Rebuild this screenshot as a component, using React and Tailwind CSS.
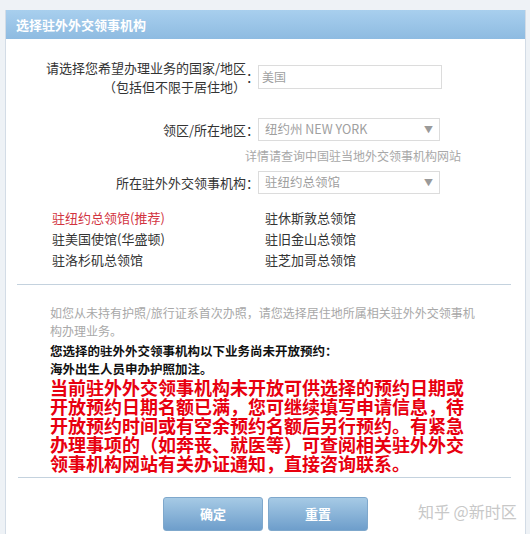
import React from "react";

const font = { fontFamily: '"Noto Sans CJK SC", "Noto Sans", sans-serif' };

function Arrow() {
  return <span className="text-[9px] text-[#9a9a9a] leading-none">▼</span>;
}

function SelectBox({ value }) {
  return (
    <div className="w-[182px] h-[23px] border border-[#dcdcdc] bg-white flex items-center justify-between pl-[6px] pr-[6px]">
      <span className="text-[12.5px] text-[#a0a0a0] leading-none">{value}</span>
      <Arrow />
    </div>
  );
}

function Colon() {
  return <div className="w-[12px] text-right text-[13px] text-[#333]">：</div>;
}

export default function App() {
  const left = ["驻纽约总领馆(推荐)", "驻美国使馆(华盛顿)", "驻洛杉矶总领馆"];
  const right = ["驻休斯敦总领馆", "驻旧金山总领馆", "驻芝加哥总领馆"];

  return (
    <div className="w-[530px] h-[534px] overflow-hidden bg-[#eef2f6] pt-[10px] pl-[5px] pr-[4px]" style={font}>
      <div className="relative h-full bg-white border-x border-[#d3dce6]">
        <div className="h-[29px] bg-gradient-to-b from-[#a8cfee] to-[#8ebbe1] flex items-center pl-[10px]">
          <span className="text-white text-[13px] font-bold">选择驻外外交领事机构</span>
        </div>

        <div className="pt-[19px]">
          {/* country */}
          <div className="flex items-center">
            <div className="w-[240px] text-right text-[13px] leading-[19px] text-[#333]">
              <div>请选择您希望办理业务的国家/地区</div>
              <div>（包括但不限于居住地）</div>
            </div>
            <Colon />
            <div className="w-[184px] h-[24px] border border-[#dcdcdc] flex items-center pl-[3px]">
              <span className="text-[12px] text-[#a0a0a0]">美国</span>
            </div>
          </div>

          {/* region */}
          <div className="flex items-center mt-[22px]">
            <div className="w-[240px] text-right text-[13px] text-[#333]">领区/所在地区</div>
            <Colon />
            <SelectBox value="纽约州 NEW YORK" />
          </div>
          <div className="pl-[239px] mt-[6px] text-[12px] leading-[18px] text-[#a8a8a8]">
            详情请查询中国驻当地外交领事机构网站
          </div>

          {/* mission */}
          <div className="flex items-center mt-[6px]">
            <div className="w-[240px] text-right text-[13px] text-[#333]">所在驻外外交领事机构</div>
            <Colon />
            <SelectBox value="驻纽约总领馆" />
          </div>

          {/* list */}
          <div className="flex mt-[13px] pl-[46px] text-[13px] leading-[21px]">
            <div className="w-[213px]">
              {left.map((t, i) => (
                <div key={t} className={i === 0 ? "text-[#d2343f]" : "text-[#333]"}>
                  {t}
                </div>
              ))}
            </div>
            <div>
              {right.map((t) => (
                <div key={t} className="text-[#333]">
                  {t}
                </div>
              ))}
            </div>
          </div>

          <div className="ml-[11px] mr-[14px] mt-[14px] border-t border-[#c4d2de]" />

          <div className="pl-[44px] pt-[19px]">
            <p className="text-[12px] leading-[18px] text-[#a8a8a8]">
              如您从未持有护照/旅行证系首次办照，请您选择居住地所属相关驻外外交领事机
              <br />
              构办理业务。
            </p>
            <p className="mt-[2px] text-[12.5px] leading-[18px] font-bold text-[#111]">
              您选择的驻外外交领事机构以下业务尚未开放预约：
              <br />
              海外出生人员申办护照加注。
            </p>
            <p className="text-[18px] leading-[19px] font-bold text-[#e8000f]">
              当前驻外外交领事机构未开放可供选择的预约日期或
              <br />
              开放预约日期名额已满，您可继续填写申请信息，待
              <br />
              开放预约时间或有空余预约名额后另行预约。有紧急
              <br />
              办理事项的（如奔丧、就医等）可查阅相关驻外外交
              <br />
              领事机构网站有关办证通知，直接咨询联系。
            </p>
          </div>

          <div className="ml-[12px] mr-[14px] mt-[4px] border-t border-[#c4d2de]" />

          <div className="flex justify-center gap-[5px] mt-[19px]">
            {["确定", "重置"].map((t) => (
              <button
                key={t}
                className="w-[100px] h-[34px] rounded-[3px] border border-[#7fa8cc] bg-gradient-to-b from-[#a6cae5] to-[#6e9ecb] text-white text-[13px] font-bold"
              >
                {t}
              </button>
            ))}
          </div>
        </div>

        <div className="absolute left-[412px] top-[489px] text-[16px] text-[#c8c8c8]">
          知乎 @新时区
        </div>
      </div>
    </div>
  );
}
